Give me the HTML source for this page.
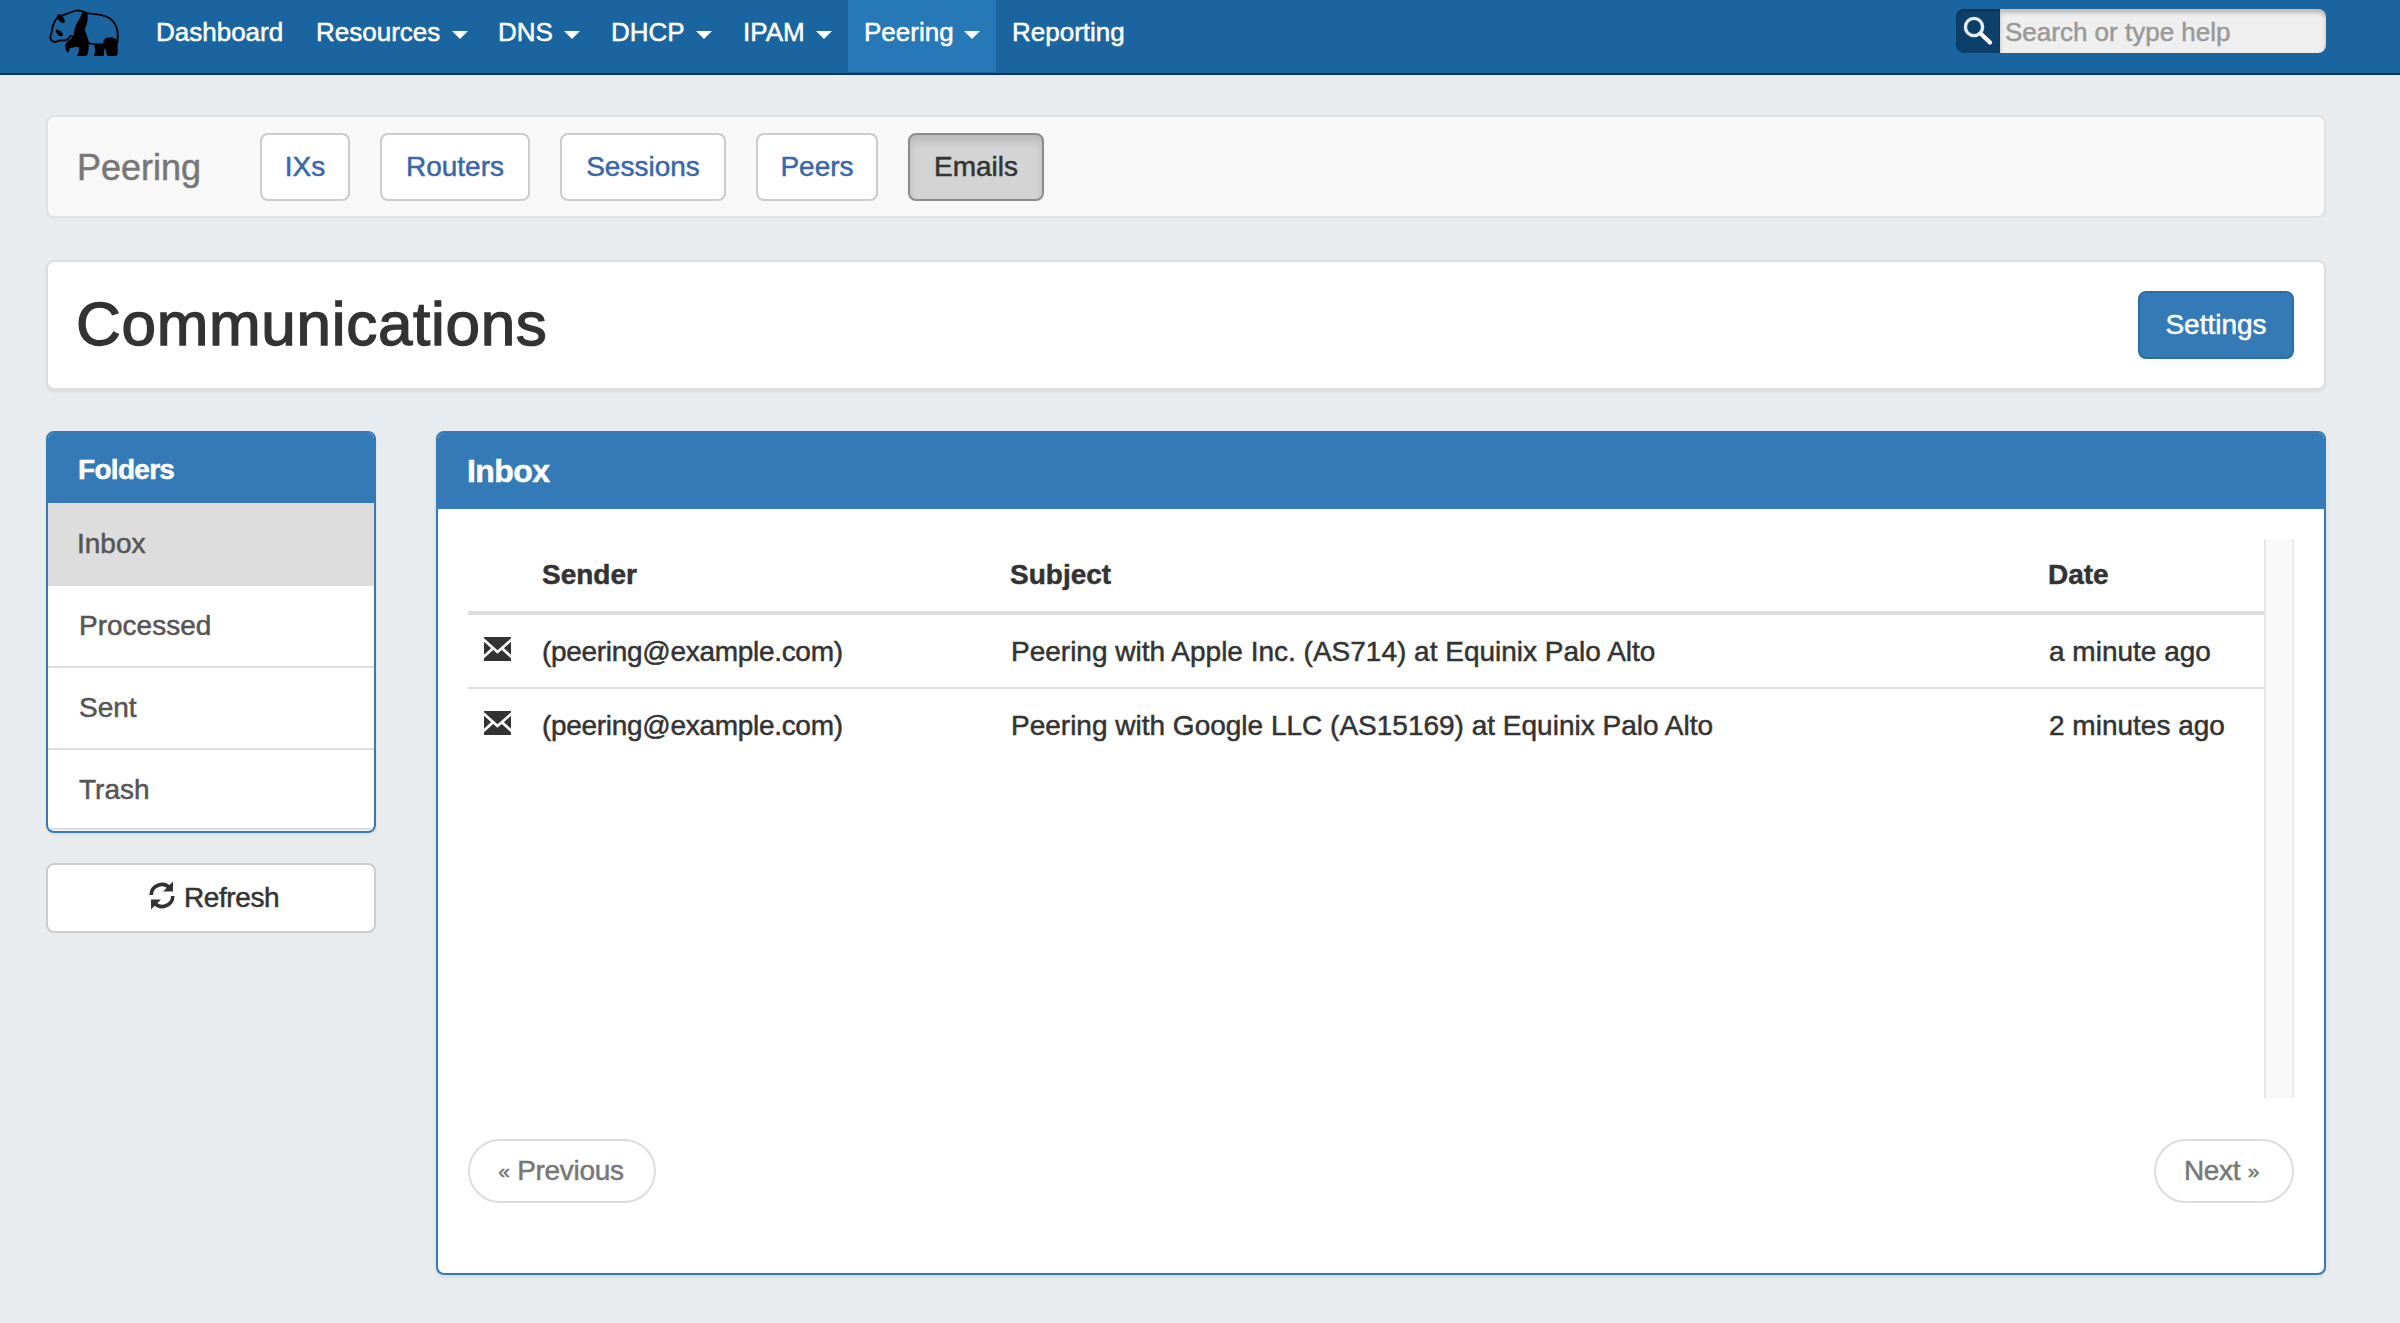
<!DOCTYPE html>
<html><head><meta charset="utf-8">
<style>
*{box-sizing:border-box;margin:0;padding:0}
html,body{width:2400px;height:1323px;overflow:hidden}
body{background:#e9ecef;font-family:"Liberation Sans",sans-serif;font-size:28px;color:#333;position:relative;-webkit-text-stroke:0.5px currentColor}
.abs{position:absolute}
/* top navbar */
#topnav{left:0;top:0;width:2400px;height:75px;background:#1a65a0;border-bottom:2px solid #0c3560}
#topnav .item{position:absolute;top:0;height:72px;color:#fff;font-size:26px;line-height:36px;padding-top:14px;white-space:nowrap}
#topnav .item.active{background:#2679b6}
.caret{position:absolute;width:0;height:0;border-top:8px solid #fff;border-left:8px solid transparent;border-right:8px solid transparent}
#search{left:1956px;top:9px;width:370px;height:44px}
#search .addon{position:absolute;left:0;top:0;width:44px;height:44px;background:#0c406b;border-radius:8px 0 0 8px;box-shadow:inset 0 2px 2px rgba(0,0,0,.25)}
#search .inp{position:absolute;left:44px;top:0;width:326px;height:44px;background:#efefef;border-radius:0 8px 8px 0;box-shadow:inset 0 4px 4px rgba(0,0,0,.22);color:#999;font-size:26px;line-height:36px;padding-top:5px;padding-left:5px;white-space:nowrap}
/* sub navbar */
#subnav{left:46px;top:115px;width:2280px;height:103px;background:#f8f8f8;border:2px solid #e1e1e1;border-radius:8px}
#subnav .brand{position:absolute;left:29px;top:30.5px;font-size:36px;line-height:40px;color:#777}
.btn{position:absolute;height:68px;border:2px solid #ccc;border-radius:8px;background:#fff;text-align:center;font-size:28px;line-height:40px;padding-top:12px;white-space:nowrap}
#subnav .btn{top:16px;color:#3a67a7}
#subnav .btn.active{background:#d4d4d4;border-color:#8c8c8c;color:#333;box-shadow:inset 0 6px 10px rgba(0,0,0,.125)}
/* title panel */
#titlepanel{left:46px;top:260px;width:2280px;height:130px;background:#fff;border:2px solid #ddd;border-radius:8px;box-shadow:0 2px 3px rgba(0,0,0,.06)}
#titlepanel h1{position:absolute;left:28px;letter-spacing:0.7px;-webkit-text-stroke:1.4px #333;top:21.5px;font-size:62px;font-weight:normal;line-height:80px;color:#333;white-space:nowrap}
.btn-primary{background:#337ab7;border-color:#2e6da4;color:#fff}
/* folders */
#folders{left:46px;top:431px;width:330px;height:402px;border:2px solid #337ab7;border-radius:8px;background:#fff;box-shadow:0 2px 3px rgba(0,0,0,.06);overflow:hidden}
#folders .head{height:70px;letter-spacing:-0.7px;background:#337ab7;color:#fff;font-weight:bold;font-size:28px;line-height:40px;padding:17px 0 0 30px}
.li{position:absolute;left:0;width:326px;height:82px;font-size:28px;line-height:40px;padding:20px 0 0 31px;color:#555;border-top:2px solid #ddd}
#refresh{left:46px;top:863px;width:330px;height:70px;color:#333}
/* inbox panel */
#inbox{left:436px;top:431px;width:1890px;height:844px;border:2px solid #337ab7;border-radius:8px;background:#fff;box-shadow:0 2px 4px rgba(0,0,0,.08);overflow:hidden}
#inbox .head{height:76px;letter-spacing:-0.6px;background:#337ab7;color:#fff;font-weight:bold;font-size:32px;line-height:36px;padding:20px 0 0 29px}
.th,.td{position:absolute;font-size:28px;line-height:40px;white-space:nowrap;color:#333}
.th{font-weight:bold}
.hline{position:absolute;height:2px;background:#ddd}
.pager{position:absolute;top:708px;height:64px;border:2px solid #ddd;border-radius:32px;color:#777;font-size:28px;line-height:40px;padding-top:10px;text-align:center;white-space:nowrap;background:#fff}
</style></head>
<body>
<div id="topnav" class="abs">
  <svg class="abs" style="left:40px;top:0" width="100" height="74" viewBox="0 0 1788 1323">
    <g fill="none" stroke="#000" stroke-width="34" stroke-linecap="round" stroke-linejoin="round">
      <path d="M390,280 C470,250 560,210 650,190 C720,178 770,195 830,235 C900,245 1000,250 1100,270 C1250,300 1360,400 1385,560 C1395,640 1390,700 1385,760"/>
      <path d="M330,290 C270,360 225,450 215,540 C200,600 180,650 185,690 C200,740 260,760 300,745 C340,720 400,720 440,725 C480,720 520,690 545,640 C570,650 590,655 610,650"/>
      <path d="M870,770 C930,790 1020,800 1140,790"/>
    </g>
    <g fill="#000">
      <path d="M310,270 C330,245 370,250 400,285 C440,330 460,390 430,410 C390,420 340,380 320,340 C305,310 300,285 310,270Z"/>
      <path d="M290,530 C310,520 360,550 395,580 C420,610 415,650 380,650 C340,645 300,610 285,570 C280,550 282,535 290,530Z"/>
      <path d="M760,215 L850,235 C860,300 855,420 803,509 C800,560 850,640 868,731 C875,800 870,900 858,944 C850,975 840,1000 831,1000 L660,1000 C685,955 700,925 697,896 C695,865 692,848 688,840 C640,835 570,845 533,864 C520,900 512,940 488,948 C460,900 445,840 453,801 C465,760 495,738 530,712 C560,690 588,668 600,640 C605,560 620,500 640,450 C690,360 740,290 760,215 Z"/>
      <path d="M1134,731 C1150,680 1200,665 1257,665 C1320,665 1365,690 1375,720 C1392,800 1395,900 1389,950 C1385,975 1375,1000 1360,1000 L1200,1000 C1190,950 1178,900 1166,866 L1152,872 C1150,920 1145,970 1139,1000 L958,1000 C975,960 987,930 987,900 C985,860 975,830 967,800 C1030,795 1090,795 1134,790 Z"/>
    </g>
  </svg>
  <div class="item" style="left:156px">Dashboard</div>
  <div class="item" style="left:316px">Resources</div><div class="caret abs" style="left:452px;top:31px;margin:0"></div>
  <div class="item" style="left:498px">DNS</div><div class="caret abs" style="left:564px;top:31px;margin:0"></div>
  <div class="item" style="left:611px">DHCP</div><div class="caret abs" style="left:696px;top:31px;margin:0"></div>
  <div class="item active" style="left:848px;width:148px"></div>
  <div class="item" style="left:743px">IPAM</div><div class="caret abs" style="left:816px;top:31px;margin:0"></div>
  <div class="item" style="left:864px">Peering</div><div class="caret abs" style="left:964px;top:31px;margin:0"></div>
  <div class="item" style="left:1012px">Reporting</div>
  <div id="search" class="abs">
    <div class="addon">
      <svg class="abs" style="left:0;top:0" width="44" height="44" viewBox="0 0 44 44">
        <circle cx="18" cy="18" r="8.6" fill="none" stroke="#e6eef5" stroke-width="3.4"/>
        <line x1="24.5" y1="24.5" x2="34" y2="33.5" stroke="#fff" stroke-width="4.3" stroke-linecap="round"/>
      </svg>
    </div>
    <div class="inp">Search or type help</div>
  </div>
</div>

<div id="subnav" class="abs">
  <div class="brand">Peering</div>
  <div class="btn" style="left:212px;width:90px">IXs</div>
  <div class="btn" style="left:332px;width:150px">Routers</div>
  <div class="btn" style="left:512px;width:166px">Sessions</div>
  <div class="btn" style="left:708px;width:122px">Peers</div>
  <div class="btn active" style="left:860px;width:136px">Emails</div>
</div>

<div id="titlepanel" class="abs">
  <h1>Communications</h1>
  <div class="btn btn-primary" style="left:2090px;top:29px;width:156px">Settings</div>
</div>

<div id="folders" class="abs">
  <div class="head">Folders</div>
  <div class="li" style="top:70px;background:#ddd;border-color:#ddd;padding-left:29px;padding-top:19px">Inbox</div>
  <div class="li" style="top:151px">Processed</div>
  <div class="li" style="top:233px">Sent</div>
  <div class="li" style="top:315px;border-bottom:2px solid #ddd">Trash</div>
</div>

<div id="refresh" class="btn abs" style="padding-top:13px">
  <svg style="position:absolute;left:100px;top:15.5px" width="28" height="29" viewBox="0 0 28 29">
    <path d="M3.2,14 A10.6,10.6 0 0 1 21.8,7.2" fill="none" stroke="#333" stroke-width="3.6"/>
    <path d="M25,0.5 L25,10.5 L15,10.5 Z" fill="#333"/>
    <path d="M24.8,15 A10.6,10.6 0 0 1 6.2,21.8" fill="none" stroke="#333" stroke-width="3.6"/>
    <path d="M3,28.5 L3,18.5 L13,18.5 Z" fill="#333"/>
  </svg>
  <span style="position:absolute;left:136px;top:12.5px;letter-spacing:-0.4px">Refresh</span>
</div>

<div id="inbox" class="abs">
  <div class="head">Inbox</div>
  <div class="th" style="left:104px;top:122px">Sender</div>
  <div class="th" style="left:572px;top:122px">Subject</div>
  <div class="th" style="left:1610px;top:122px">Date</div>
  <div class="hline" style="left:30px;top:178px;width:1796px;height:4px"></div>
  <svg class="abs" style="left:46px;top:204px" width="27" height="24" viewBox="0 0 27 24"><use href="#env"/></svg>
  <div class="td" style="left:104px;top:199px;letter-spacing:-0.3px">(peering@example.com)</div>
  <div class="td" style="left:573px;top:199px">Peering with Apple Inc. (AS714) at Equinix Palo Alto</div>
  <div class="td" style="left:1611px;top:199px">a minute ago</div>
  <div class="hline" style="left:30px;top:254px;width:1796px"></div>
  <svg class="abs" style="left:46px;top:278px" width="27" height="24" viewBox="0 0 27 24"><use href="#env"/></svg>
  <div class="td" style="left:104px;top:273px;letter-spacing:-0.3px">(peering@example.com)</div>
  <div class="td" style="left:573px;top:273px">Peering with Google LLC (AS15169) at Equinix Palo Alto</div>
  <div class="td" style="left:1611px;top:273px">2 minutes ago</div>
  <div class="abs" style="left:1826px;top:106px;width:30px;height:559px;background:#f9f9f9;border-left:2px solid #e6e6e6;border-right:2px solid #ececec"></div>
  <div class="pager" style="left:30px;top:706px;width:188px;letter-spacing:-0.3px;padding-right:2px"><span style="font-size:21px;position:relative;top:-2px">«</span> Previous</div>
  <div class="pager" style="left:1716px;top:706px;width:140px;letter-spacing:-0.3px;padding-right:5px">Next <span style="font-size:21px;position:relative;top:-2px">»</span></div>
</div>

<svg width="0" height="0" style="position:absolute">
  <defs>
    <g id="env">
      <rect x="0" y="0" width="27" height="24" fill="#333"/>
      <polyline points="-0.5,2.6 13.5,15 27.5,2.6" fill="none" stroke="#fff" stroke-width="2.7"/>
      <line x1="-0.8" y1="20.2" x2="9.6" y2="10.8" stroke="#fff" stroke-width="2.7"/>
      <line x1="27.8" y1="20.2" x2="17.4" y2="10.8" stroke="#fff" stroke-width="2.7"/>
    </g>
  </defs>
</svg>
</body></html>
